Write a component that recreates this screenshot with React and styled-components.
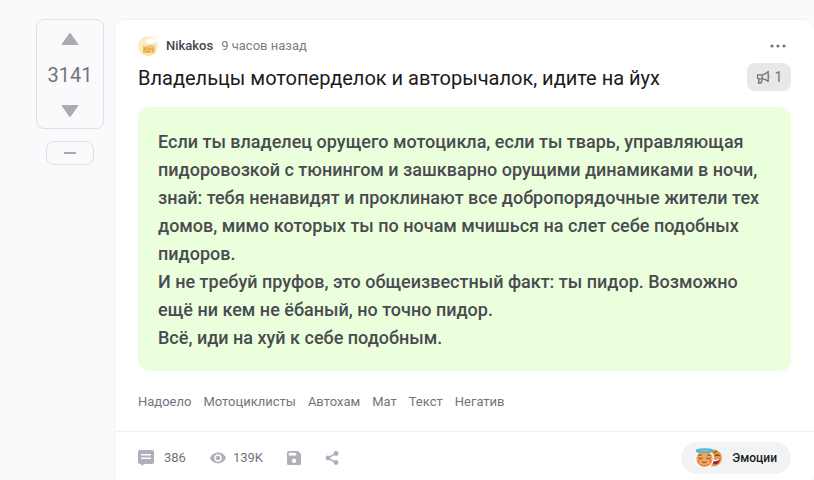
import React from 'react';
import styled, { createGlobalStyle } from 'styled-components';

const lines = [
    'Если ты владелец орущего мотоцикла, если ты тварь, управляющая пидоровозкой с тюнингом и зашкварно орущими динамиками в ночи, знай: тебя ненавидят и проклинают все добропорядочные жители тех домов, мимо которых ты по ночам мчишься на слет себе подобных пидоров.',
    'И не требуй пруфов, это общеизвестный факт: ты пидор. Возможно ещё ни кем не ёбаный, но точно пидор.',
    'Всё, иди на хуй к себе подобным.',
];

const tags = ['Надоело', 'Мотоциклисты', 'Автохам', 'Мат', 'Текст', 'Негатив'];

const App = () => {
    return (
        <Page>
            <GlobalStyle />
            <Sidebar>
                <Rating>
                    <VoteButton type="button" aria-label="Плюс">
                        <svg width="18" height="12" viewBox="0 0 18 12">
                            <path d="M8.2.5Q9-.4 9.8.5L17.2 11Q17.6 12 16.6 12H1.4Q.4 12 .8 11Z" fill="#a9abb2" />
                        </svg>
                    </VoteButton>
                    <Score>3141</Score>
                    <VoteButton type="button" aria-label="Минус">
                        <svg width="18" height="12" viewBox="0 0 18 12">
                            <path d="M8.2 11.5Q9 12.4 9.8 11.5L17.2 1Q17.6 0 16.6 0H1.4Q.4 0 .8 1Z" fill="#a9abb2" />
                        </svg>
                    </VoteButton>
                </Rating>
                <Collapse type="button" aria-label="Свернуть">
                    <svg width="12" height="2" viewBox="0 0 12 2">
                        <rect width="12" height="2" fill="#a9abb2" />
                    </svg>
                </Collapse>
            </Sidebar>

            <Card>
                <Content>
                    <Header>
                        <Avatar />
                        <UserName href="#user">Nikakos</UserName>
                        <Time>9 часов назад</Time>
                        <More type="button" aria-label="Ещё">
                            <svg width="16" height="4" viewBox="0 0 16 4">
                                <g fill="#72747f">
                                    <circle cx="2" cy="2" r="1.6" />
                                    <circle cx="8" cy="2" r="1.6" />
                                    <circle cx="14" cy="2" r="1.6" />
                                </g>
                            </svg>
                        </More>
                    </Header>

                    <TitleRow>
                        <Title>Владельцы мотоперделок и авторычалок, идите на йух</Title>
                        <Horn type="button">
                            <HornIcon />
                            <span>1</span>
                        </Horn>
                    </TitleRow>

                    <Story>
                        {lines.map((line) => (
                            <p key={line}>{line}</p>
                        ))}
                    </Story>

                    <Tags>
                        {tags.map((tag) => (
                            <Tag href="#tag" key={tag}>{tag}</Tag>
                        ))}
                    </Tags>
                </Content>

                <Footer>
                    <Action href="#comments">
                        <svg width="16" height="16" viewBox="0 0 16 16">
                            <path d="M2 0H14Q16 0 16 2V12Q16 14 14 14H6.5L3.2 16V14H2Q0 14 0 12V2Q0 0 2 0Z" fill="#adafba" />
                            <path d="M3 4H13V5.5H3ZM3 7.6H13V9.1H3Z" fill="#fff" />
                        </svg>
                        <span>386</span>
                    </Action>
                    <Views>
                        <svg width="16" height="12" viewBox="0 0 16 12">
                            <path d="M8 .6C4.4.6 1.4 2.8 0 6C1.4 9.2 4.4 11.4 8 11.4S14.6 9.2 16 6C14.6 2.8 11.6.6 8 .6Z" fill="#adafba" />
                            <circle cx="8" cy="6" r="3.7" fill="#fff" />
                            <circle cx="8" cy="6" r="2.2" fill="#adafba" />
                        </svg>
                        <span>139K</span>
                    </Views>
                    <IconButton type="button" aria-label="Сохранить">
                        <svg width="14" height="14" viewBox="0 0 14 14">
                            <path d="M1.6 0H11L14 3V12.4Q14 14 12.4 14H1.6Q0 14 0 12.4V1.6Q0 0 1.6 0Z" fill="#adafba" />
                            <path d="M1.8 1.8H9.2V4.6H1.8Z" fill="#fff" />
                            <circle cx="7" cy="9.8" r="2.2" fill="#fff" />
                        </svg>
                    </IconButton>
                    <IconButton type="button" aria-label="Поделиться">
                        <svg width="14" height="14" viewBox="0 0 14 14">
                            <path d="M11 2.4L2.8 7L11 11.6" fill="none" stroke="#adafba" strokeWidth="1.5" />
                            <g fill="#adafba">
                                <circle cx="11" cy="2.5" r="2.4" />
                                <circle cx="2.9" cy="7" r="2.4" />
                                <circle cx="11" cy="11.5" r="2.4" />
                            </g>
                        </svg>
                    </IconButton>
                    <Emotions type="button">
                        <Emoji />
                        <span>Эмоции</span>
                    </Emotions>
                </Footer>
            </Card>
        </Page>
    );
};

const Avatar = () => (
    <svg width="20" height="20" viewBox="0 0 20 20">
        <clipPath id="face">
            <circle cx="10" cy="10" r="10" />
        </clipPath>
        <g clipPath="url(#face)">
            <rect width="20" height="20" fill="#fbecc2" />
            <path d="M5 10.5L14 8.5L17 10V17H5Z" fill="#f6c66d" />
            <path d="M5 10.5L11 11V17H5Z" fill="#f0ba62" />
            <path d="M8 6Q7 3 10 3.5Q11 1.5 14 2.5Q18 1.5 19 4Q19 7 16.5 7L16 9L10 8.5Q10 7 8 6Z" fill="#fffdf7" />
            <path d="M10 8.5L16 9L16.5 7" fill="none" stroke="#e3dac5" strokeWidth=".8" />
            <path d="M6 12.5H7.5V14H6ZM11 12H13V13.5H11ZM14 13H15V15H14ZM9 15H12V16H9Z" fill="#d39a4c" />
            <path d="M4 17H17V20H4Z" fill="#fbe5ab" />
        </g>
    </svg>
);

const HornIcon = () => (
    <svg width="14" height="14" viewBox="0 0 14 14" fill="none" stroke="#72747f" strokeWidth="1.3" strokeLinejoin="round">
        <path d="M1.6 4.8H7Q9.600 4.200 12.200 1.500V11.500Q9.600 9 7 8.800H2.200L1.600 8.200Z" />
        <path d="M6.200 4.800V8.800M3.300 9L2.400 13H5L6.500 9M12.800 5.500V7.500" />
    </svg>
);

const Emoji = () => (
    <svg width="28" height="20" viewBox="0 0 28 20">
        <circle cx="18.5" cy="10" r="8.5" fill="#e89c4b" />
        <path d="M19 4.5L21.5 3.5M20 8Q22 6 24.5 7.5" fill="none" stroke="#6b3a23" strokeWidth="1.1" />
        <path d="M17 12.500L25 10.500Q25 17 18.500 16.500Z" fill="#9c2b35" />
        <path d="M18 12.200L24.500 10.700L24 12.300L18 13.500Z" fill="#fff" />
        <circle cx="9.5" cy="10.500" r="9.5" fill="#fff" />
        <circle cx="9.5" cy="10.5" r="8.2" fill="#f0a95a" />
        <path d="M1.6 12.5Q3 18.5 9.5 18.7Q16 18.5 17.4 12.5Q15 16.8 9.5 17Q4 16.8 1.6 12.5Z" fill="#de8b3c" />
        <ellipse cx="9.5" cy="2.800" rx="8" ry="1.600" fill="#e7b172" stroke="#38b7e8" strokeWidth="1.700" />
        <path d="M4 7.500L6.500 6.800M12.500 6.800L15 7.500M3.600 10Q5.500 12 7.400 10M11.600 10Q13.500 12 15.400 10M7.500 14Q9.500 15.500 11.500 14" fill="none" stroke="#713e22" strokeWidth="1" strokeLinecap="round" />
        <circle cx="3.600" cy="13" r="1.400" fill="#f77f6b" />
        <circle cx="15.400" cy="13" r="1.400" fill="#f77f6b" />
    </svg>
);

const GlobalStyle = createGlobalStyle`
  * {
    box-sizing: border-box;
  }

  body {
    margin: 0;
    background-color: #fafafd;
    font-family: Roboto, "Liberation Sans", sans-serif;
    font-size: 13px;
    line-height: 20px;
    color: #72747a;
  }

  button {
    padding: 0;
    border: 0;
    background: none;
    font: inherit;
    color: inherit;
    cursor: pointer;
  }

  a {
    color: inherit;
    text-decoration: none;
  }

  p {
    margin: 0;
  }

  svg {
    display: block;
    flex-shrink: 0;
  }
`;

const Page = styled.div`
  display: flex;
  align-items: flex-start;
  gap: 10px;
  padding: 19px 0 0 36px;
`;

const Sidebar = styled.aside`
  display: flex;
  flex-direction: column;
  align-items: center;
  gap: 12px;
  width: 68px;
  flex-shrink: 0;
`;

const Rating = styled.div`
  display: flex;
  flex-direction: column;
  align-items: center;
  width: 100%;
  padding-top: 2px;
  border: 1px solid #dfdfe4;
  border-radius: 8px;
`;

const VoteButton = styled.button`
  display: flex;
  align-items: center;
  justify-content: center;
  width: 100%;
  height: 34px;
`;

const Score = styled.div`
  font-size: 20px;
  line-height: 38px;
`;

const Collapse = styled.button`
  display: flex;
  align-items: center;
  justify-content: center;
  width: 48px;
  height: 24px;
  && {
    border: 1px solid #dfdfe4;
  }
  border-radius: 8px;
`;

const Card = styled.article`
  flex: 1;
  min-width: 0;
  border: 1px solid #f3f3f6;
  border-right: 0;
  border-radius: 10px;
  background-color: #fff;
`;

const Content = styled.div`
  padding: 16px 23px 19px;
`;

const Header = styled.header`
  display: flex;
  align-items: center;
  gap: 8px;
`;

const UserName = styled.a`
  font-weight: 500;
  color: #43454c;
`;

const Time = styled.time`
  color: #7c7e87;
`;

const More = styled.button`
  display: flex;
  align-items: center;
  height: 20px;
  margin-left: auto;
  margin-right: 5px;
`;

const TitleRow = styled.div`
  display: flex;
  align-items: flex-start;
  justify-content: space-between;
  gap: 16px;
  margin: 7px 0 14px;
`;

const Title = styled.h1`
  margin: 0;
  font-size: 20px;
  font-weight: 400;
  line-height: 30px;
  color: #1a1a1c;
`;

const Horn = styled.button`
  display: flex;
  align-items: center;
  justify-content: center;
  gap: 5px;
  width: 44px;
  height: 28px;
  flex-shrink: 0;
  border-radius: 8px;
  && {
    background-color: #e8e8e8;
    font-size: 14px;
  }
`;

const Story = styled.div`
  padding: 21px 20px 19px;
  border-radius: 10px;
  background-color: #ecffdd;
  font-size: 18px;
  font-weight: 500;
  line-height: 28px;
  color: #494b51;
`;

const Tags = styled.nav`
  display: flex;
  flex-wrap: wrap;
  gap: 12px;
  margin-top: 21px;
`;

const Tag = styled.a`
  color: #72747a;
`;

const Footer = styled.footer`
  display: flex;
  align-items: center;
  padding: 10px 23px;
  border-top: 1px solid #f0f0f3;
`;

const Action = styled.a`
  display: flex;
  align-items: center;
  gap: 10px;
  margin-right: 24px;
`;

const Views = styled.div`
  display: flex;
  align-items: center;
  gap: 7px;
  margin-right: 24px;
`;

const IconButton = styled.button`
  display: flex;
  align-items: center;
  margin-right: 24px;
`;

const Emotions = styled.button`
  display: flex;
  align-items: center;
  gap: 9px;
  height: 32px;
  margin-left: auto;
  border-radius: 16px;
  && {
    padding: 0 14px;
    background-color: #f2f3f5;
    font-size: 12px;
    font-weight: 500;
    color: #1a1a1c;
  }
`;

export default App;
